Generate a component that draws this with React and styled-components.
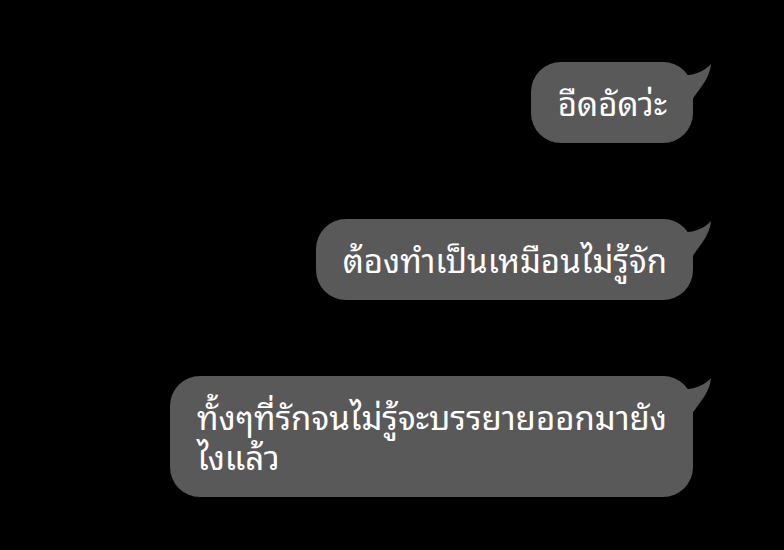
import React from "react";
import styled, { createGlobalStyle } from "styled-components";

const GlobalStyle = createGlobalStyle`
  html, body {
    margin: 0;
    padding: 0;
    background: #000;
  }
  body {
    font-family: "Noto Sans Thai Looped", "Noto Sans Thai", "Noto Sans", sans-serif;
  }
`;

const Screen = styled.div`
  width: 784px;
  height: 550px;
  background: #000;
  overflow: hidden;
  display: flex;
  flex-direction: column;
  align-items: flex-end;
  gap: 76px;
  padding: 62px 91px 0 0;
  box-sizing: border-box;
`;

const Bubble = styled.div`
  position: relative;
  box-sizing: border-box;
  padding: 20px 26px 21px 27px;
  background: #595959;
  border-radius: 30px;
  color: #fff;
  font-size: 33px;
  line-height: 40px;
  white-space: pre;
`;

const Tail = styled.svg`
  position: absolute;
  top: 0;
  right: -19px;
  width: 50px;
  height: 38px;
  display: block;
`;

const messages = [
  "อืดอัดว่ะ",
  "ต้องทำเป็นเหมือนไม่รู้จัก",
  "ทั้งๆที่รักจนไม่รู้จะบรรยายออกมายัง\nไงแล้ว",
];

const Message = ({ text }) => (
  <Bubble>
    {text}
    <Tail viewBox="0 0 50 38">
      <path
        d="M0 0 C10 0 12 12 20 13 C30 14 42 10 49 2 C48 16 38 26 30 38 L0 38 Z"
        fill="#595959"
      />
    </Tail>
  </Bubble>
);

export default function App() {
  return (
    <>
      <GlobalStyle />
      <Screen>
        {messages.map((m, i) => (
          <Message key={i} text={m} />
        ))}
      </Screen>
    </>
  );
}
